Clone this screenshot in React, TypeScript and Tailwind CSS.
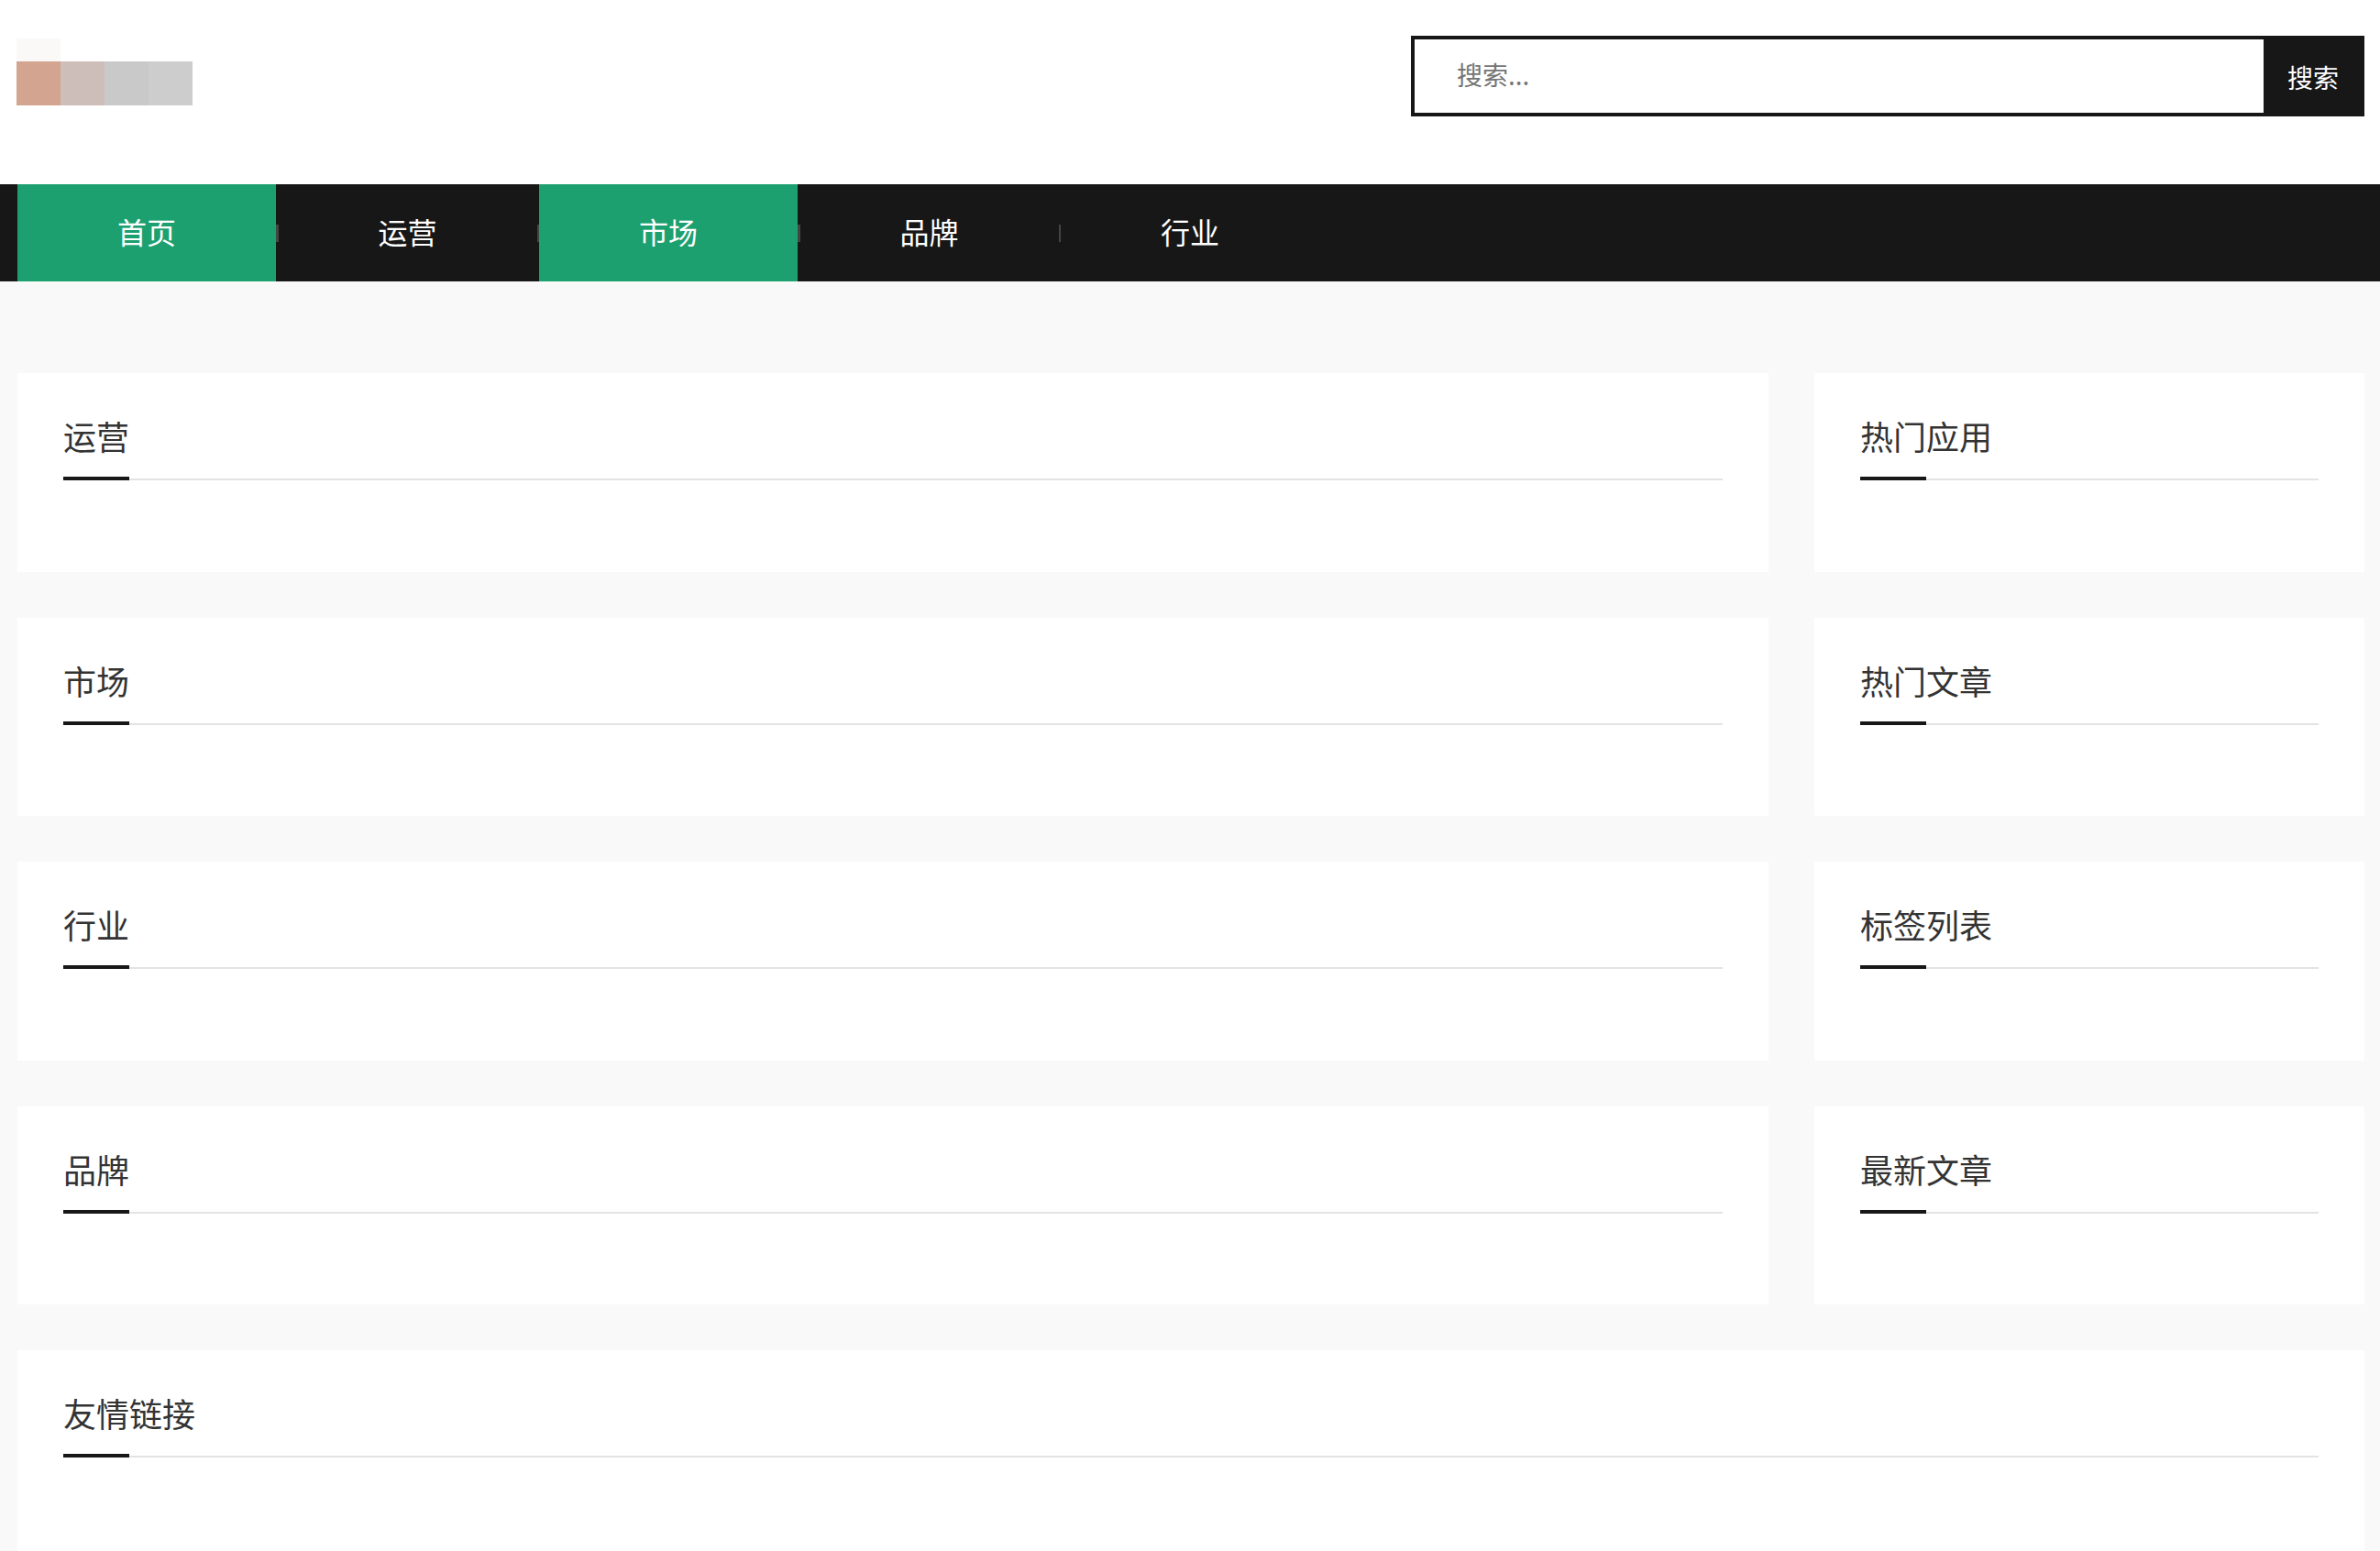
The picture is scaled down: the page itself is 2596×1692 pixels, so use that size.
const FONT = "font-['Noto_Sans_CJK_SC','Liberation_Sans',sans-serif]";

const NAV = [
  { label: "首页", active: true },
  { label: "运营", active: false },
  { label: "市场", active: true },
  { label: "品牌", active: false },
  { label: "行业", active: false },
];

function Heading({ title }: { title: string }) {
  return (
    <div>
      <h2 className="pb-[24px] text-[36px] leading-[42px] font-normal text-[#333333]">{title}</h2>
      <div className="flex h-[4px] items-end">
        <div className="h-[4px] w-[72px] bg-[#171717]" />
        <div className="h-[2px] flex-1 bg-[#e3e3e3]" />
      </div>
    </div>
  );
}

function Card({ title, className }: { title: string; className: string }) {
  return (
    <section className={`bg-white px-[50px] pt-[47px] ${className}`}>
      <Heading title={title} />
    </section>
  );
}

export default function App() {
  const main = ["运营", "市场", "行业", "品牌"];
  const side = ["热门应用", "热门文章", "标签列表", "最新文章"];
  return (
    <div className={`h-[1692px] overflow-hidden bg-[#f9f9f9] ${FONT}`}>
      <header className="flex h-[201px] items-start justify-between bg-white pr-[17px] pl-[18px]">
        <div className="mt-[42px] flex flex-col">
          <div className="h-[25px] w-[48px] bg-[#fbf9f8]" />
          <div className="flex h-[48px]">
            <div className="w-[48px] bg-[#d3a48f]" />
            <div className="w-[48px] bg-[#cebeb9]" />
            <div className="w-[48px] bg-[#c9c9c9]" />
            <div className="w-[48px] bg-[#cdcdcd]" />
          </div>
        </div>
        <form className="mt-[39px] flex h-[88px] w-[1040px] border-4 border-[#171717]">
          <input
            placeholder="搜索..."
            className="min-w-0 flex-1 bg-white pb-[4px] pl-[46px] text-[28px] text-[#333333] outline-none placeholder:text-[#757575]"
          />
          <button type="button" className="w-[106px] bg-[#171717] pt-[2px] pl-[2px] text-[28px] text-white">
            搜索
          </button>
        </form>
      </header>

      <nav className="flex h-[106px] items-center bg-[#171717] pl-[19px] text-[32px] text-white">
        {NAV.map((item, i) => (
          <div key={item.label} className="contents">
            <a
              className={`flex h-full w-[282px] items-center justify-center pb-[4px] ${item.active ? "bg-[#1da06f]" : ""}`}
            >
              {item.label}
            </a>
            {i < NAV.length - 1 && <span className="h-[19px] w-[2.5px] bg-[#444444]" />}
          </div>
        ))}
      </nav>

      <main className="flex flex-col gap-[50px] pt-[100px] pr-[17px] pl-[19px]">
        {main.map((title, i) => (
          <div key={title} className="flex gap-[50px]">
            <Card title={title} className="h-[216.5px] w-[1910px]" />
            <Card title={side[i]} className="h-[216.5px] w-[600px]" />
          </div>
        ))}
        <Card title="友情链接" className="h-[300px]" />
      </main>
    </div>
  );
}
